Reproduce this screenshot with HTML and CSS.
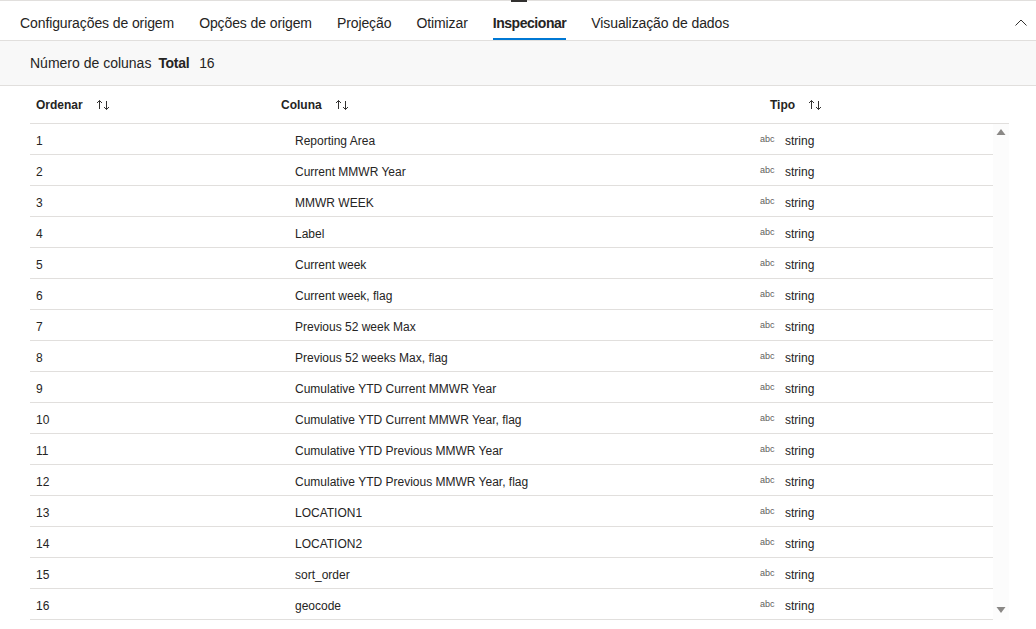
FILE: index.html
```html
<!DOCTYPE html>
<html lang="pt">
<head>
<meta charset="utf-8">
<link rel="stylesheet" href="styles.css">
</head>
<body>
<div class="panel">
  <div class="grip"></div>
  <nav class="tabs">
    <div class="tab-list">
      <span class="tab">Configurações de origem</span>
      <span class="tab">Opções de origem</span>
      <span class="tab">Projeção</span>
      <span class="tab">Otimizar</span>
      <span class="tab active">Inspecionar</span>
      <span class="tab">Visualização de dados</span>
    </div>
    <svg class="collapse" width="12" height="7" viewBox="0 0 12 7"><path d="M0.5 6.5 L6 1 L11.5 6.5" fill="none" stroke="#323130" stroke-width="1"/></svg>
  </nav>
  <div class="summary">
    <span class="summary-label">Número de colunas</span>
    <span class="summary-total">Total</span>
    <span class="summary-count">16</span>
  </div>
  <div class="table">
    <div class="thead">
      <div class="th">Ordenar <svg class="sort" width="14" height="12" viewBox="0 0 14 12"><path d="M3.5 10 V1.5 M1 4 L3.5 1.5 L6 4 M10.5 2 V10.5 M8 8 L10.5 10.5 L13 8" fill="none" stroke="#323130" stroke-width="1"/></svg></div>
      <div class="th">Coluna <svg class="sort" width="14" height="12" viewBox="0 0 14 12"><path d="M3.5 10 V1.5 M1 4 L3.5 1.5 L6 4 M10.5 2 V10.5 M8 8 L10.5 10.5 L13 8" fill="none" stroke="#323130" stroke-width="1"/></svg></div>
      <div class="th">Tipo <svg class="sort" width="14" height="12" viewBox="0 0 14 12"><path d="M3.5 10 V1.5 M1 4 L3.5 1.5 L6 4 M10.5 2 V10.5 M8 8 L10.5 10.5 L13 8" fill="none" stroke="#323130" stroke-width="1"/></svg></div>
    </div>
    <div class="tbody">
      <div class="rows">
        <div class="row"><span class="c1">1</span><span class="c2">Reporting Area</span><span class="c3"><span class="abc">abc</span>string</span></div>
        <div class="row"><span class="c1">2</span><span class="c2">Current MMWR Year</span><span class="c3"><span class="abc">abc</span>string</span></div>
        <div class="row"><span class="c1">3</span><span class="c2">MMWR WEEK</span><span class="c3"><span class="abc">abc</span>string</span></div>
        <div class="row"><span class="c1">4</span><span class="c2">Label</span><span class="c3"><span class="abc">abc</span>string</span></div>
        <div class="row"><span class="c1">5</span><span class="c2">Current week</span><span class="c3"><span class="abc">abc</span>string</span></div>
        <div class="row"><span class="c1">6</span><span class="c2">Current week, flag</span><span class="c3"><span class="abc">abc</span>string</span></div>
        <div class="row"><span class="c1">7</span><span class="c2">Previous 52 week Max</span><span class="c3"><span class="abc">abc</span>string</span></div>
        <div class="row"><span class="c1">8</span><span class="c2">Previous 52 weeks Max, flag</span><span class="c3"><span class="abc">abc</span>string</span></div>
        <div class="row"><span class="c1">9</span><span class="c2">Cumulative YTD Current MMWR Year</span><span class="c3"><span class="abc">abc</span>string</span></div>
        <div class="row"><span class="c1">10</span><span class="c2">Cumulative YTD Current MMWR Year, flag</span><span class="c3"><span class="abc">abc</span>string</span></div>
        <div class="row"><span class="c1">11</span><span class="c2">Cumulative YTD Previous MMWR Year</span><span class="c3"><span class="abc">abc</span>string</span></div>
        <div class="row"><span class="c1">12</span><span class="c2">Cumulative YTD Previous MMWR Year, flag</span><span class="c3"><span class="abc">abc</span>string</span></div>
        <div class="row"><span class="c1">13</span><span class="c2">LOCATION1</span><span class="c3"><span class="abc">abc</span>string</span></div>
        <div class="row"><span class="c1">14</span><span class="c2">LOCATION2</span><span class="c3"><span class="abc">abc</span>string</span></div>
        <div class="row"><span class="c1">15</span><span class="c2">sort_order</span><span class="c3"><span class="abc">abc</span>string</span></div>
        <div class="row"><span class="c1">16</span><span class="c2">geocode</span><span class="c3"><span class="abc">abc</span>string</span></div>
      </div>
      <div class="scrollbar">
        <svg width="10" height="8" viewBox="0 0 10 8"><path d="M0.5 7 L5 1 L9.5 7 Z" fill="#8a8886"/></svg>
        <svg width="10" height="8" viewBox="0 0 10 8"><path d="M0.5 1 L5 7 L9.5 1 Z" fill="#8a8886"/></svg>
      </div>
    </div>
  </div>
</div>
</body>
</html>
```
FILE: styles.css
```css
* { box-sizing: border-box; }
html, body {
  margin: 0;
  padding: 0;
  background: #ffffff;
  font-family: "Liberation Sans", Arial, sans-serif;
  color: #252423;
  width: 1036px;
  height: 629px;
  overflow: hidden;
}
.panel {
  position: relative;
  border-top: 1px solid #e1dfdd;
}
.grip {
  position: absolute;
  top: -1px;
  left: 511px;
  width: 16px;
  height: 2px;
  background: #323130;
}
.tabs {
  height: 40px;
  display: flex;
  align-items: center;
  justify-content: space-between;
  border-bottom: 1px solid #e1dfdd;
  padding: 0 9px 0 20px;
}
.tab-list {
  display: flex;
  gap: 25px;
  height: 100%;
}
.tab {
  font-size: 14px;
  height: 100%;
  display: flex;
  align-items: center;
  padding-top: 7px;
  border-bottom: 2px solid transparent;
  white-space: nowrap;
  letter-spacing: -0.1px;
}
.tab.active {
  font-weight: bold;
  letter-spacing: -0.45px;
  border-bottom-color: #0078d4;
}
.collapse { margin-top: 4px; }
.summary {
  height: 45px;
  background: #f8f8f8;
  border-bottom: 1px solid #e1dfdd;
  display: flex;
  align-items: center;
  padding-left: 30px;
  font-size: 14px;
}
.summary-total {
  font-weight: bold;
  margin-left: 7px;
  letter-spacing: -0.3px;
}
.summary-count { margin-left: 10px; letter-spacing: -0.3px; }
.table {
  padding: 0 27px 0 30px;
}
.thead {
  display: grid;
  grid-template-columns: 245px 489px 1fr;
  height: 38px;
  border-bottom: 1px solid #e1dfdd;
  align-items: center;
}
.th {
  font-size: 12px;
  font-weight: bold;
  padding-left: 6px;
  display: flex;
  align-items: center;
  padding-top: 1px;
}
.sort { margin-left: 13px; }
.tbody {
  display: flex;
}
.rows { flex: 1; }
.row {
  display: grid;
  grid-template-columns: 245px 479px 1fr;
  height: 31px;
  border-bottom: 1px solid #e1dfdd;
  align-items: center;
  font-size: 12px;
  padding-top: 3px;
}
.c1 { padding-left: 6px; }
.c2 { padding-left: 20px; }
.c3 { padding-left: 6px; display: flex; align-items: center; }
.abc {
  font-size: 9px;
  color: #605e5c;
  width: 25px;
  margin-top: -4px;
}
.scrollbar {
  width: 16px;
  background: #fcfcfc;
  display: flex;
  flex-direction: column;
  justify-content: space-between;
  align-items: center;
  padding: 4px 0 6px;
}
```
